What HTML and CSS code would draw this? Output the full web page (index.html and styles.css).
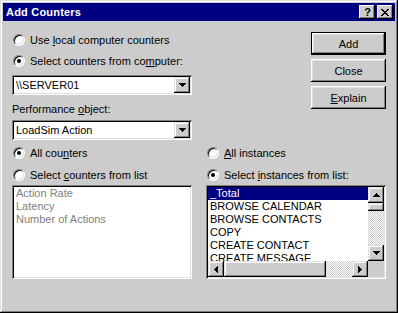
FILE: index.html
```html
<!DOCTYPE html>
<html lang="en">
<head>
    <meta charset="UTF-8">
    <title>Add Counters</title>
    <link rel="stylesheet" href="styles.css">
</head>
<body>
    <div class="window">
        <div class="titlebar">
            <span class="title">Add Counters</span>
            <div class="tbtns">
                <span class="tbtn help">?</span>
                <span class="tbtn">
                    <svg width="8" height="7" viewBox="0 0 8 7"><path d="M0 0h2v1H0zM6 0h2v1H6zM1 1h2v1H1zM5 1h2v1H5zM2 2h4v1H2zM3 3h2v1H3zM2 4h4v1H2zM1 5h2v1H1zM5 5h2v1H5zM0 6h2v1H0zM6 6h2v1H6z" fill="#000"/></svg>
                </span>
            </div>
        </div>

        <div class="client">
            <div class="top">
                <div class="source">
                    <div class="opt"><span class="radio"></span><span>Use <u>l</u>ocal computer counters</span></div>
                    <div class="opt"><span class="radio on"></span><span>Select counters from co<u>m</u>puter:</span></div>
                    <div class="combo">
                        <span class="value">\\SERVER01</span>
                        <span class="drop"><svg width="7" height="4" viewBox="0 0 7 4"><path d="M0 0h7v1H0zM1 1h5v1H1zM2 2h3v1H2zM3 3h1v1H3z" fill="#000"/></svg></span>
                    </div>
                    <div class="label">Performance <u>o</u>bject:</div>
                    <div class="combo combo-2">
                        <span class="value">LoadSim Action</span>
                        <span class="drop"><svg width="7" height="4" viewBox="0 0 7 4"><path d="M0 0h7v1H0zM1 1h5v1H1zM2 2h3v1H2zM3 3h1v1H3z" fill="#000"/></svg></span>
                    </div>
                </div>
                <div class="actions">
                    <span class="btn default">Add</span>
                    <span class="btn">Close</span>
                    <span class="btn"><span><u>E</u>xplain</span></span>
                </div>
            </div>

            <div class="pickers">
                <div class="picker">
                    <div class="opt"><span class="radio on"></span><span>All cou<u>n</u>ters</span></div>
                    <div class="opt"><span class="radio"></span><span>Select <u>c</u>ounters from list</span></div>
                    <div class="list disabled">
                        <div class="item">Action Rate</div>
                        <div class="item">Latency</div>
                        <div class="item">Number of Actions</div>
                    </div>
                </div>
                <div class="picker">
                    <div class="opt"><span class="radio"></span><span><u>A</u>ll instances</span></div>
                    <div class="opt"><span class="radio on"></span><span>Select <u>i</u>nstances from list:</span></div>
                    <div class="list scroll">
                        <div class="items">
                            <div class="item selected">_Total</div>
                            <div class="item">BROWSE CALENDAR</div>
                            <div class="item">BROWSE CONTACTS</div>
                            <div class="item">COPY</div>
                            <div class="item">CREATE CONTACT</div>
                            <div class="item">CREATE MESSAGE</div>
                        </div>
                        <div class="vscroll">
                            <span class="sbtn"><svg width="7" height="4" viewBox="0 0 7 4"><path d="M3 0h1v1H3zM2 1h3v1H2zM1 2h5v1H1zM0 3h7v1H0z" fill="#000"/></svg></span>
                            <span class="thumb v"></span>
                            <span class="track"></span>
                            <span class="sbtn"><svg width="7" height="4" viewBox="0 0 7 4"><path d="M0 0h7v1H0zM1 1h5v1H1zM2 2h3v1H2zM3 3h1v1H3z" fill="#000"/></svg></span>
                        </div>
                        <div class="hscroll">
                            <span class="sbtn"><svg width="4" height="7" viewBox="0 0 4 7"><path d="M3 0h1v7H3zM2 1h1v5H2zM1 2h1v3H1zM0 3h1v1H0z" fill="#000"/></svg></span>
                            <span class="thumb h"></span>
                            <span class="track"></span>
                            <span class="sbtn"><svg width="4" height="7" viewBox="0 0 4 7"><path d="M0 0h1v7H0zM1 1h1v5H1zM2 2h1v3H2zM3 3h1v1H3z" fill="#000"/></svg></span>
                        </div>
                        <div class="corner"></div>
                    </div>
                </div>
            </div>
        </div>
    </div>
</body>
</html>
```

FILE: styles.css
```css
body {
    margin: 0;
    font-family: 'Liberation Sans', Arial, sans-serif;
    font-size: 11px;
    color: #000;
    background: #cccccc;
}
.window {
    width: 398px;
    height: 313px;
    box-sizing: border-box;
    padding: 3px;
    background: #cccccc;
    box-shadow: inset -1px -1px #000, inset 1px 1px #dfdfdf, inset -2px -2px #808080, inset 2px 2px #fff;
    display: flex;
    flex-direction: column;
}
.titlebar {
    height: 18px;
    background: #000080;
    color: #fff;
    display: flex;
    align-items: center;
    justify-content: space-between;
    padding: 0 2px 0 3px;
}
.title {
    font-weight: bold;
    font-size: 11px;
    letter-spacing: 0.2px;
}
.tbtns {
    display: flex;
    gap: 2px;
}
.tbtn {
    width: 16px;
    height: 14px;
    box-sizing: border-box;
    display: flex;
    align-items: center;
    justify-content: center;
    background: #cccccc;
    color: #000;
    box-shadow: inset -1px -1px #000, inset 1px 1px #fff, inset -2px -2px #808080;
}
.tbtn.help {
    font-weight: bold;
    font-size: 11px;
    padding-left: 1px;
}
.client {
    flex: 1;
    padding: 11px 9px 0;
}
.top {
    display: flex;
    justify-content: space-between;
    align-items: flex-start;
}
.source {
    width: 180px;
}
.opt {
    display: flex;
    align-items: center;
    gap: 5px;
    height: 12px;
    line-height: 12px;
    white-space: nowrap;
}
.source .opt:first-child {
    margin-top: 2px;
}
.source .opt + .opt {
    margin-top: 9px;
}
.radio {
    position: relative;
    width: 12px;
    height: 12px;
    margin-left: 1px;
    box-sizing: border-box;
    border-radius: 50%;
    background: #fff;
    border: 1px solid;
    border-color: #808080 #fff #fff #808080;
    box-shadow: inset 1px 1px #000, inset -1px -1px #dfdfdf;
    flex: none;
}
.radio.on::after {
    content: '';
    position: absolute;
    left: 3px;
    top: 3px;
    width: 4px;
    height: 4px;
    border-radius: 50%;
    background: #000;
}
.combo {
    height: 20px;
    margin-top: 8px;
    box-sizing: border-box;
    padding: 2px;
    display: flex;
    background: #fff;
    box-shadow: inset 1px 1px #808080, inset -1px -1px #fff, inset 2px 2px #000, inset -2px -2px #dfdfdf;
}
.combo-2 {
    margin-top: 4px;
}
.combo .value {
    flex: 1;
    padding-left: 2px;
    line-height: 16px;
}
.drop,
.sbtn {
    width: 16px;
    height: 16px;
    box-sizing: border-box;
    display: flex;
    align-items: center;
    justify-content: center;
    background: #cccccc;
    box-shadow: inset -1px -1px #000, inset 1px 1px #dfdfdf, inset -2px -2px #808080, inset 2px 2px #fff;
    flex: none;
}
.label {
    margin-top: 8px;
    height: 13px;
    line-height: 13px;
}
.actions {
    display: flex;
    flex-direction: column;
    gap: 4px;
}
.btn {
    width: 75px;
    height: 23px;
    box-sizing: border-box;
    display: flex;
    align-items: center;
    justify-content: center;
    background: #cccccc;
    box-shadow: inset -1px -1px #000, inset 1px 1px #fff, inset -2px -2px #808080, inset 2px 2px #dfdfdf;
}
.btn.default {
    border: 1px solid #000;
}
.pickers {
    display: flex;
    justify-content: space-between;
    margin-top: 7px;
}
.picker {
    width: 180px;
}
.picker .opt + .opt {
    margin-top: 10px;
}
.list {
    margin-top: 4px;
    height: 94px;
    box-sizing: border-box;
    padding: 2px;
    background: #fff;
    box-shadow: inset 1px 1px #808080, inset -1px -1px #fff, inset 2px 2px #000, inset -2px -2px #dfdfdf;
    overflow: hidden;
}
.item {
    height: 13px;
    line-height: 13px;
    padding-left: 2px;
    white-space: nowrap;
}
.list.disabled .item {
    color: #808080;
}
.item.selected {
    background: #000080;
    color: #fff;
}
.list.scroll {
    display: grid;
    grid-template-columns: 1fr 16px;
    grid-template-rows: 1fr 16px;
}
.items {
    overflow: hidden;
    min-height: 0;
}
.vscroll {
    display: flex;
    flex-direction: column;
    min-height: 0;
}
.hscroll {
    display: flex;
}
.track {
    flex: 1;
    background: repeating-conic-gradient(#cccccc 0 25%, #fff 0 50%) 0 0 / 2px 2px;
}
.thumb {
    background: #cccccc;
    box-shadow: inset -1px -1px #000, inset 1px 1px #dfdfdf, inset -2px -2px #808080, inset 2px 2px #fff;
    flex: none;
}
.thumb.v {
    height: 8px;
}
.thumb.h {
    width: 102px;
}
.corner {
    background: #cccccc;
}
```
